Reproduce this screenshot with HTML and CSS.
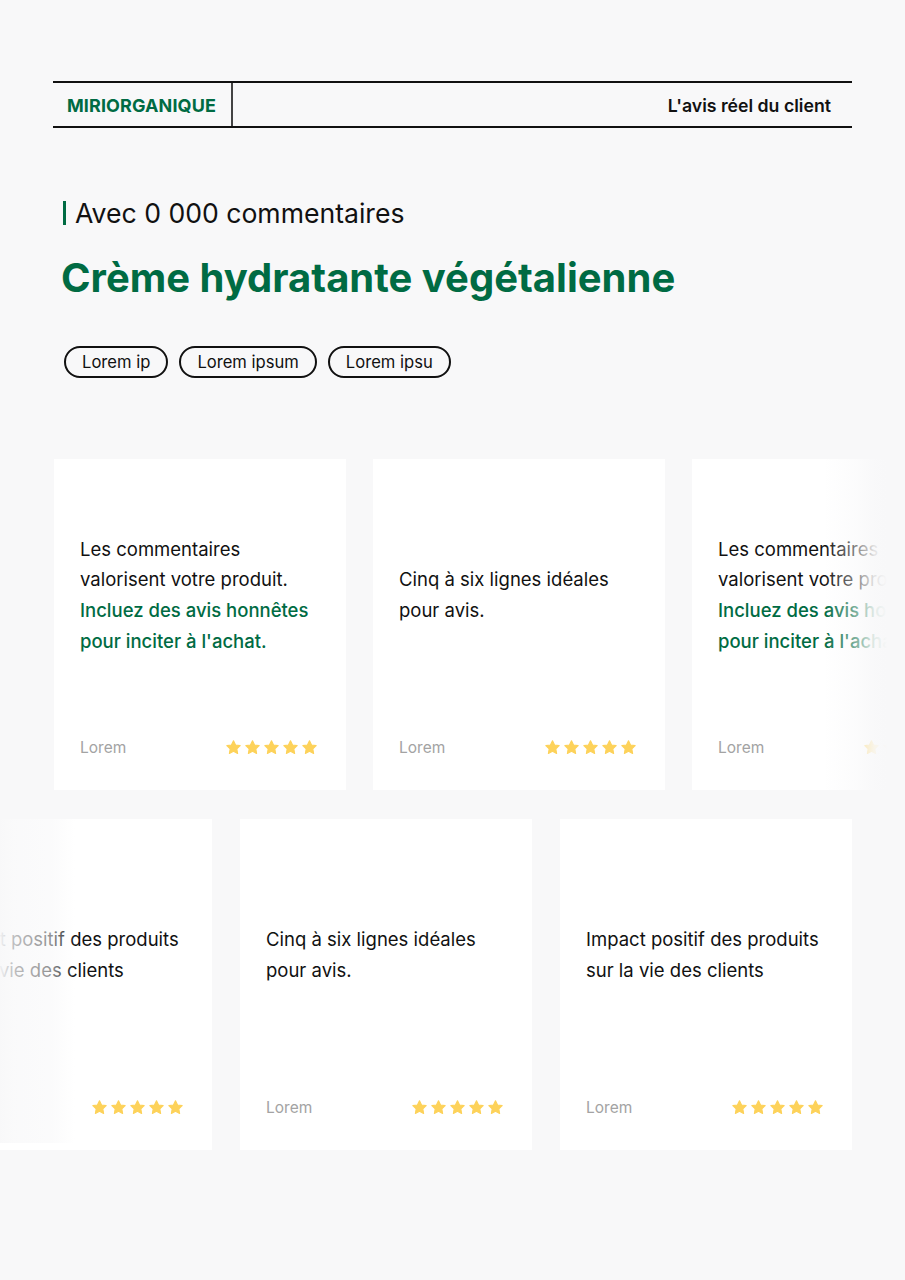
FILE: index.html
```html
<!DOCTYPE html>
<html lang="fr">
<head>
<meta charset="utf-8">
<title>Miriorganique</title>
<link rel="stylesheet" href="styles.css">
</head>
<body>
<div class="page">
  <header class="topbar">
    <div class="brand">MIRIORGANIQUE</div>
    <div class="tagline">L'avis réel du client</div>
  </header>

  <section class="hero">
    <p class="count">Avec 0 000 commentaires</p>
    <h1 class="title">Crème hydratante végétalienne</h1>
    <div class="tags">
      <span class="tag">Lorem ip</span>
      <span class="tag">Lorem ipsum</span>
      <span class="tag">Lorem ipsu</span>
    </div>
  </section>

  <section class="reviews">
    <div class="row row-one">
      <article class="card">
        <div class="card-body"><p>Les commentaires valorisent votre produit. <span class="accent">Incluez des avis honnêtes pour inciter à l'achat.</span></p></div>
        <div class="card-foot"><span class="author">Lorem</span><span class="stars"><svg viewBox="0 0 24 24"><path d="M12 2.6l2.9 5.9 6.5 0.9-4.7 4.6 1.1 6.5L12 17.4l-5.8 3.1 1.1-6.5-4.7-4.6 6.5-0.9z"/></svg><svg viewBox="0 0 24 24"><path d="M12 2.6l2.9 5.9 6.5 0.9-4.7 4.6 1.1 6.5L12 17.4l-5.8 3.1 1.1-6.5-4.7-4.6 6.5-0.9z"/></svg><svg viewBox="0 0 24 24"><path d="M12 2.6l2.9 5.9 6.5 0.9-4.7 4.6 1.1 6.5L12 17.4l-5.8 3.1 1.1-6.5-4.7-4.6 6.5-0.9z"/></svg><svg viewBox="0 0 24 24"><path d="M12 2.6l2.9 5.9 6.5 0.9-4.7 4.6 1.1 6.5L12 17.4l-5.8 3.1 1.1-6.5-4.7-4.6 6.5-0.9z"/></svg><svg viewBox="0 0 24 24"><path d="M12 2.6l2.9 5.9 6.5 0.9-4.7 4.6 1.1 6.5L12 17.4l-5.8 3.1 1.1-6.5-4.7-4.6 6.5-0.9z"/></svg></span></div>
      </article>
      <article class="card">
        <div class="card-body"><p>Cinq à six lignes idéales pour avis.</p></div>
        <div class="card-foot"><span class="author">Lorem</span><span class="stars"><svg viewBox="0 0 24 24"><path d="M12 2.6l2.9 5.9 6.5 0.9-4.7 4.6 1.1 6.5L12 17.4l-5.8 3.1 1.1-6.5-4.7-4.6 6.5-0.9z"/></svg><svg viewBox="0 0 24 24"><path d="M12 2.6l2.9 5.9 6.5 0.9-4.7 4.6 1.1 6.5L12 17.4l-5.8 3.1 1.1-6.5-4.7-4.6 6.5-0.9z"/></svg><svg viewBox="0 0 24 24"><path d="M12 2.6l2.9 5.9 6.5 0.9-4.7 4.6 1.1 6.5L12 17.4l-5.8 3.1 1.1-6.5-4.7-4.6 6.5-0.9z"/></svg><svg viewBox="0 0 24 24"><path d="M12 2.6l2.9 5.9 6.5 0.9-4.7 4.6 1.1 6.5L12 17.4l-5.8 3.1 1.1-6.5-4.7-4.6 6.5-0.9z"/></svg><svg viewBox="0 0 24 24"><path d="M12 2.6l2.9 5.9 6.5 0.9-4.7 4.6 1.1 6.5L12 17.4l-5.8 3.1 1.1-6.5-4.7-4.6 6.5-0.9z"/></svg></span></div>
      </article>
      <article class="card">
        <div class="card-body"><p>Les commentaires valorisent votre produit. <span class="accent">Incluez des avis honnêtes pour inciter à l'achat.</span></p></div>
        <div class="card-foot"><span class="author">Lorem</span><span class="stars"><svg viewBox="0 0 24 24"><path d="M12 2.6l2.9 5.9 6.5 0.9-4.7 4.6 1.1 6.5L12 17.4l-5.8 3.1 1.1-6.5-4.7-4.6 6.5-0.9z"/></svg><svg viewBox="0 0 24 24"><path d="M12 2.6l2.9 5.9 6.5 0.9-4.7 4.6 1.1 6.5L12 17.4l-5.8 3.1 1.1-6.5-4.7-4.6 6.5-0.9z"/></svg><svg viewBox="0 0 24 24"><path d="M12 2.6l2.9 5.9 6.5 0.9-4.7 4.6 1.1 6.5L12 17.4l-5.8 3.1 1.1-6.5-4.7-4.6 6.5-0.9z"/></svg><svg viewBox="0 0 24 24"><path d="M12 2.6l2.9 5.9 6.5 0.9-4.7 4.6 1.1 6.5L12 17.4l-5.8 3.1 1.1-6.5-4.7-4.6 6.5-0.9z"/></svg><svg viewBox="0 0 24 24"><path d="M12 2.6l2.9 5.9 6.5 0.9-4.7 4.6 1.1 6.5L12 17.4l-5.8 3.1 1.1-6.5-4.7-4.6 6.5-0.9z"/></svg></span></div>
      </article>
      <div class="fade fade-right"></div>
    </div>

    <div class="row row-two">
      <article class="card">
        <div class="card-body"><p>Impact positif des produits sur la vie des clients</p></div>
        <div class="card-foot"><span class="author">Lorem</span><span class="stars"><svg viewBox="0 0 24 24"><path d="M12 2.6l2.9 5.9 6.5 0.9-4.7 4.6 1.1 6.5L12 17.4l-5.8 3.1 1.1-6.5-4.7-4.6 6.5-0.9z"/></svg><svg viewBox="0 0 24 24"><path d="M12 2.6l2.9 5.9 6.5 0.9-4.7 4.6 1.1 6.5L12 17.4l-5.8 3.1 1.1-6.5-4.7-4.6 6.5-0.9z"/></svg><svg viewBox="0 0 24 24"><path d="M12 2.6l2.9 5.9 6.5 0.9-4.7 4.6 1.1 6.5L12 17.4l-5.8 3.1 1.1-6.5-4.7-4.6 6.5-0.9z"/></svg><svg viewBox="0 0 24 24"><path d="M12 2.6l2.9 5.9 6.5 0.9-4.7 4.6 1.1 6.5L12 17.4l-5.8 3.1 1.1-6.5-4.7-4.6 6.5-0.9z"/></svg><svg viewBox="0 0 24 24"><path d="M12 2.6l2.9 5.9 6.5 0.9-4.7 4.6 1.1 6.5L12 17.4l-5.8 3.1 1.1-6.5-4.7-4.6 6.5-0.9z"/></svg></span></div>
      </article>
      <article class="card">
        <div class="card-body"><p>Cinq à six lignes idéales pour avis.</p></div>
        <div class="card-foot"><span class="author">Lorem</span><span class="stars"><svg viewBox="0 0 24 24"><path d="M12 2.6l2.9 5.9 6.5 0.9-4.7 4.6 1.1 6.5L12 17.4l-5.8 3.1 1.1-6.5-4.7-4.6 6.5-0.9z"/></svg><svg viewBox="0 0 24 24"><path d="M12 2.6l2.9 5.9 6.5 0.9-4.7 4.6 1.1 6.5L12 17.4l-5.8 3.1 1.1-6.5-4.7-4.6 6.5-0.9z"/></svg><svg viewBox="0 0 24 24"><path d="M12 2.6l2.9 5.9 6.5 0.9-4.7 4.6 1.1 6.5L12 17.4l-5.8 3.1 1.1-6.5-4.7-4.6 6.5-0.9z"/></svg><svg viewBox="0 0 24 24"><path d="M12 2.6l2.9 5.9 6.5 0.9-4.7 4.6 1.1 6.5L12 17.4l-5.8 3.1 1.1-6.5-4.7-4.6 6.5-0.9z"/></svg><svg viewBox="0 0 24 24"><path d="M12 2.6l2.9 5.9 6.5 0.9-4.7 4.6 1.1 6.5L12 17.4l-5.8 3.1 1.1-6.5-4.7-4.6 6.5-0.9z"/></svg></span></div>
      </article>
      <article class="card">
        <div class="card-body"><p>Impact positif des produits sur la vie des clients</p></div>
        <div class="card-foot"><span class="author">Lorem</span><span class="stars"><svg viewBox="0 0 24 24"><path d="M12 2.6l2.9 5.9 6.5 0.9-4.7 4.6 1.1 6.5L12 17.4l-5.8 3.1 1.1-6.5-4.7-4.6 6.5-0.9z"/></svg><svg viewBox="0 0 24 24"><path d="M12 2.6l2.9 5.9 6.5 0.9-4.7 4.6 1.1 6.5L12 17.4l-5.8 3.1 1.1-6.5-4.7-4.6 6.5-0.9z"/></svg><svg viewBox="0 0 24 24"><path d="M12 2.6l2.9 5.9 6.5 0.9-4.7 4.6 1.1 6.5L12 17.4l-5.8 3.1 1.1-6.5-4.7-4.6 6.5-0.9z"/></svg><svg viewBox="0 0 24 24"><path d="M12 2.6l2.9 5.9 6.5 0.9-4.7 4.6 1.1 6.5L12 17.4l-5.8 3.1 1.1-6.5-4.7-4.6 6.5-0.9z"/></svg><svg viewBox="0 0 24 24"><path d="M12 2.6l2.9 5.9 6.5 0.9-4.7 4.6 1.1 6.5L12 17.4l-5.8 3.1 1.1-6.5-4.7-4.6 6.5-0.9z"/></svg></span></div>
      </article>
      <div class="fade fade-left"></div>
    </div>
  </section>
</div>
</body>
</html>
```

FILE: styles.css
```css
* { box-sizing: border-box; }

html, body {
  margin: 0;
  padding: 0;
  background: #f8f8f9;
}

body {
  width: 905px;
  height: 1280px;
  overflow: hidden;
  font-family: Inter, "Noto Sans", sans-serif;
  color: #111;
}

.page {
  padding-top: 81px;
}

.topbar {
  margin-left: 53px;
  width: 799px;
  height: 47px;
  border-top: 2px solid #111;
  border-bottom: 2px solid #111;
  display: flex;
  align-items: stretch;
}

.brand {
  width: 180px;
  border-right: 2px solid #444;
  display: flex;
  align-items: center;
  padding-left: 14px;
  padding-top: 2px;
  font-weight: 700;
  font-size: 18px;
  color: #006b43;
  letter-spacing: 0.1px;
}

.tagline {
  flex: 1;
  display: flex;
  align-items: center;
  justify-content: flex-end;
  padding-right: 21px;
  padding-top: 2px;
  font-weight: 600;
  font-size: 17.7px;
  color: #111;
}

.hero {
  padding-left: 63px;
}

.count {
  margin: 73px 0 0 0;
  border-left: 3px solid #006b43;
  padding-left: 9px;
  font-size: 26.6px;
  line-height: 24px;
  font-weight: 400;
  color: #111;
}

.title {
  margin: 29px 0 0 -2px;
  font-size: 40px;
  line-height: 48px;
  font-weight: 700;
  color: #006b43;
}

.tags {
  margin-top: 44px;
  display: flex;
  gap: 11px;
  margin-left: 1px;
}

.tag {
  height: 32px;
  padding: 0 16px;
  border: 2px solid #111;
  border-radius: 16px;
  display: flex;
  align-items: center;
  font-size: 16.6px;
  color: #111;
}

.reviews {
  margin-top: 81px;
  display: flex;
  flex-direction: column;
  gap: 29px;
}

.row {
  position: relative;
  display: flex;
  gap: 27px;
}

.row-one { margin-left: 54px; }
.row-two { margin-left: -80px; gap: 28px; }

.card {
  flex: 0 0 292px;
  height: 331px;
  background: #fff;
  display: flex;
  flex-direction: column;
  padding: 0 28px 31px 26px;
}

.card-body {
  flex: 1;
  display: flex;
  align-items: center;
  padding-bottom: 4px;
}

.card-body p {
  margin: 0;
  font-size: 18.5px;
  line-height: 30.7px;
  color: #111;
}

.accent {
  color: #006b43;
  font-weight: 500;
}

.card-foot {
  height: 24px;
  display: flex;
  align-items: center;
  justify-content: space-between;
}

.author {
  font-size: 15.5px;
  color: #a3a3a3;
}

.stars {
  display: flex;
  gap: 2px;
}

.stars svg {
  width: 17px;
  height: 17px;
  fill: #fdd25a;
  stroke: #fdd25a;
  stroke-width: 1.6;
  stroke-linejoin: round;
}

.fade {
  position: absolute;
  top: 0;
  bottom: 0;
  pointer-events: none;
}

.fade-right {
  left: 770px;
  width: 81px;
  background: linear-gradient(to right, rgba(248,248,249,0) 0%, rgba(248,248,249,0.5) 40%, rgba(248,248,249,0.9) 62%, #f8f8f9 78%);
}

.fade-left {
  left: 80px;
  width: 75px;
  bottom: 7px;
  background: linear-gradient(to right, rgba(248,248,249,0.97) 0%, rgba(248,248,249,0.75) 18%, rgba(248,248,249,0.55) 70%, rgba(248,248,249,0) 100%);
}
```
